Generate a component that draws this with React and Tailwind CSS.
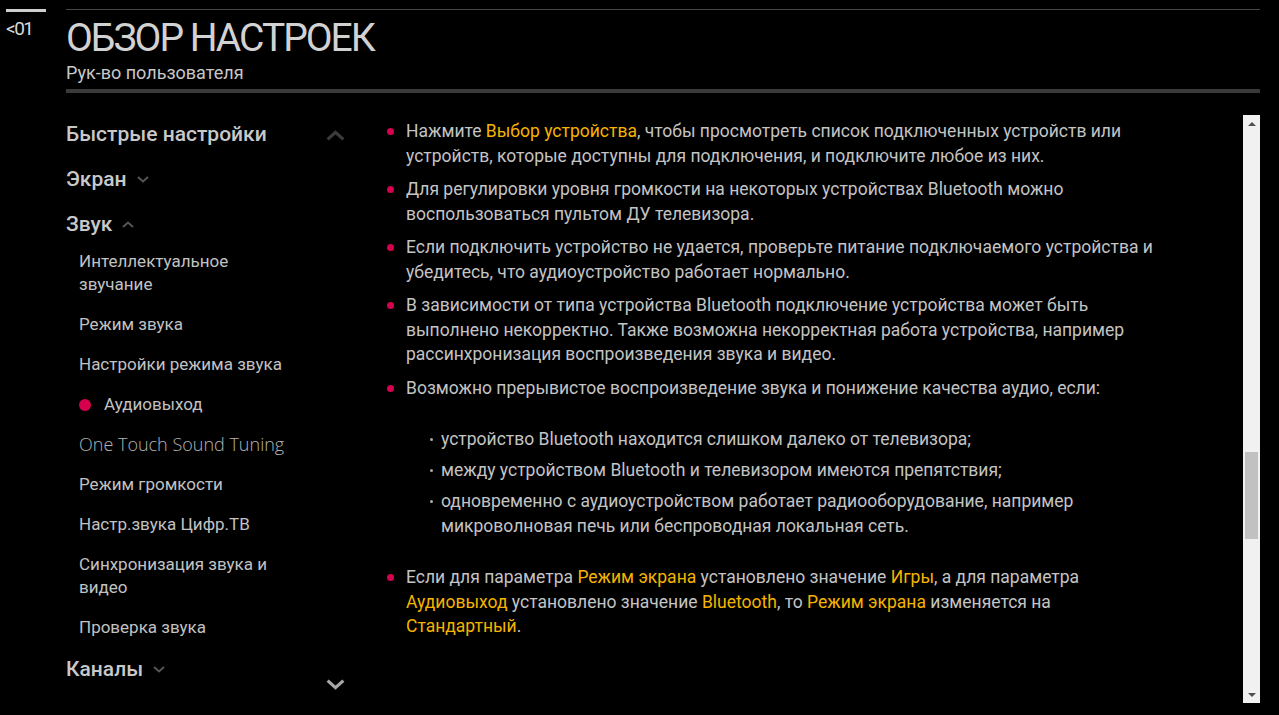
const Chevron = ({ up, className }) => (
  <svg viewBox="0 0 12 7" className={className} fill="none" stroke="currentColor" strokeWidth="2">
    {up ? <path d="M1 6 L6 1.5 L11 6" /> : <path d="M1 1 L6 5.5 L11 1" />}
  </svg>
);

const Hl = ({ children }) => <span className="text-[#f6b400]">{children}</span>;

const subItems = [
  "Интеллектуальное звучание",
  "Режим звука",
  "Настройки режима звука",
  "Аудиовыход",
  "One Touch Sound Tuning",
  "Режим громкости",
  "Настр.звука Цифр.ТВ",
  "Синхронизация звука и видео",
  "Проверка звука",
];

const Bullet = ({ children }) => (
  <li className="flex items-start gap-[12px]">
    <span className="mt-[9px] w-[7px] h-[7px] rounded-full bg-[#d6004f] shrink-0" />
    <p>{children}</p>
  </li>
);

const SubBullet = ({ children }) => (
  <li className="flex items-start gap-[8px]">
    <span className="mt-[11px] w-[3px] h-[3px] rounded-full bg-[#aaa] shrink-0" />
    <p>{children}</p>
  </li>
);

export default function App() {
  return (
    <div className="h-[715px] w-full bg-black flex overflow-hidden font-['Roboto',sans-serif] text-[#c4c4c4]">
      {/* левый отступ */}
      <div className="w-[66px] shrink-0 pt-[9px] pl-[6px]">
        <div className="w-[40px] h-[3px] bg-[#cfcfcf]" />
        <div className="mt-[5px] text-[19px] leading-[24px] tracking-[-1.5px] text-[#d8d8d8]">&lt;01</div>
      </div>

      <div className="flex-1 flex flex-col pr-[19px] min-w-0">
        {/* шапка */}
        <div className="mt-[9px] border-t border-[#474747]">
          <h1 className="mt-[6px] text-[39px] leading-[44px] tracking-[-2px] text-[#d2d2d2]">ОБЗОР НАСТРОЕК</h1>
          <p className="mt-[2px] text-[18px] leading-[22px] text-[#c8c8c8]">Рук-во пользователя</p>
          <div className="mt-[5px] h-[4px] bg-[#3a3a3a]" />
        </div>

        <div className="flex flex-1 min-h-0">
          {/* меню */}
          <nav className="relative w-[304px] shrink-0 pt-[27px]">
            <Chevron up className="absolute left-[260px] top-[37px] w-[19px] h-[11px] text-[#3c3c3c]" />
            <Chevron className="absolute left-[260px] top-[586px] w-[19px] h-[11px] text-[#a8a8a8]" />
            <div className="flex flex-col gap-[17px]">
              <div className="text-[21px] leading-[28px] font-medium text-[#c8c8c8]">Быстрые настройки</div>
              <div className="flex items-center gap-[10px] text-[21px] leading-[28px] font-medium text-[#c8c8c8]">
                Экран <Chevron className="w-[12px] h-[7px] text-[#555]" />
              </div>
              <div className="flex items-center gap-[10px] text-[21px] leading-[28px] font-medium text-[#c8c8c8]">
                Звук <Chevron up className="w-[12px] h-[7px] text-[#555]" />
              </div>
            </div>
            <ul className="mt-[12px] pl-[13px] flex flex-col gap-[17px] text-[17px] leading-[23px] text-[#c2c2c2]">
              {subItems.map((s) =>
                s === "Аудиовыход" ? (
                  <li key={s} className="flex items-center gap-[13px]">
                    <span className="w-[12px] h-[12px] rounded-full bg-[#d6004f]" />
                    {s}
                  </li>
                ) : s === "One Touch Sound Tuning" ? (
                  <li key={s} className="font-['Open_Sans',sans-serif] font-light text-[18px] text-[#b4b4b4]">{s}</li>
                ) : (
                  <li key={s} className="w-[215px]">{s}</li>
                )
              )}
            </ul>
            <div className="mt-[16px] flex items-center gap-[10px] text-[21px] leading-[28px] font-medium text-[#c8c8c8]">
              Каналы <Chevron className="w-[12px] h-[7px] text-[#555]" />
            </div>
          </nav>

          {/* текст */}
          <div className="flex-1 min-w-0 pt-[26px] pl-[17px] pr-[78px] text-[17.5px] leading-[24.5px] text-[#c4c4c4]">
            <ul className="flex flex-col gap-[9px]">
              <Bullet>
                Нажмите <Hl>Выбор устройства</Hl>, чтобы просмотреть список подключенных устройств или устройств, которые доступны для подключения, и подключите любое из них.
              </Bullet>
              <Bullet>
                Для регулировки уровня громкости на некоторых устройствах Bluetooth можно воспользоваться пультом ДУ телевизора.
              </Bullet>
              <Bullet>
                Если подключить устройство не удается, проверьте питание подключаемого устройства и убедитесь, что аудиоустройство работает нормально.
              </Bullet>
              <Bullet>
                В зависимости от типа устройства Bluetooth подключение устройства может быть выполнено некорректно. Также возможна некорректная работа устройства, например рассинхронизация воспроизведения звука и видео.
              </Bullet>
              <Bullet>
                Возможно прерывистое воспроизведение звука и понижение качества аудио, если:
              </Bullet>
            </ul>
            <ul className="mt-[27px] pl-[43px] flex flex-col gap-[6.5px]">
              <SubBullet>устройство Bluetooth находится слишком далеко от телевизора;</SubBullet>
              <SubBullet>между устройством Bluetooth и телевизором имеются препятствия;</SubBullet>
              <SubBullet>одновременно с аудиоустройством работает радиооборудование, например микроволновая печь или беспроводная локальная сеть.</SubBullet>
            </ul>
            <ul className="mt-[27px]">
              <Bullet>
                Если для параметра <Hl>Режим экрана</Hl> установлено значение <Hl>Игры</Hl>, а для параметра <Hl>Аудиовыход</Hl> установлено значение <Hl>Bluetooth</Hl>, то <Hl>Режим экрана</Hl> изменяется на <Hl>Стандартный</Hl>.
              </Bullet>
            </ul>
          </div>

          {/* полоса прокрутки */}
          <div className="w-[17px] shrink-0 mt-[22px] mb-[12px] bg-[#f1f1f1] flex flex-col items-center">
            <div className="h-[17px] flex items-center justify-center">
              <div className="w-0 h-0 border-x-[4px] border-x-transparent border-b-[4px] border-b-[#505050]" />
            </div>
            <div className="flex-1 w-full flex flex-col px-[2px]">
              <div className="h-[320px]" />
              <div className="h-[87px] bg-[#c1c1c1]" />
            </div>
            <div className="h-[17px] flex items-center justify-center">
              <div className="w-0 h-0 border-x-[4px] border-x-transparent border-t-[4px] border-t-[#505050]" />
            </div>
          </div>
        </div>
      </div>
    </div>
  );
}
